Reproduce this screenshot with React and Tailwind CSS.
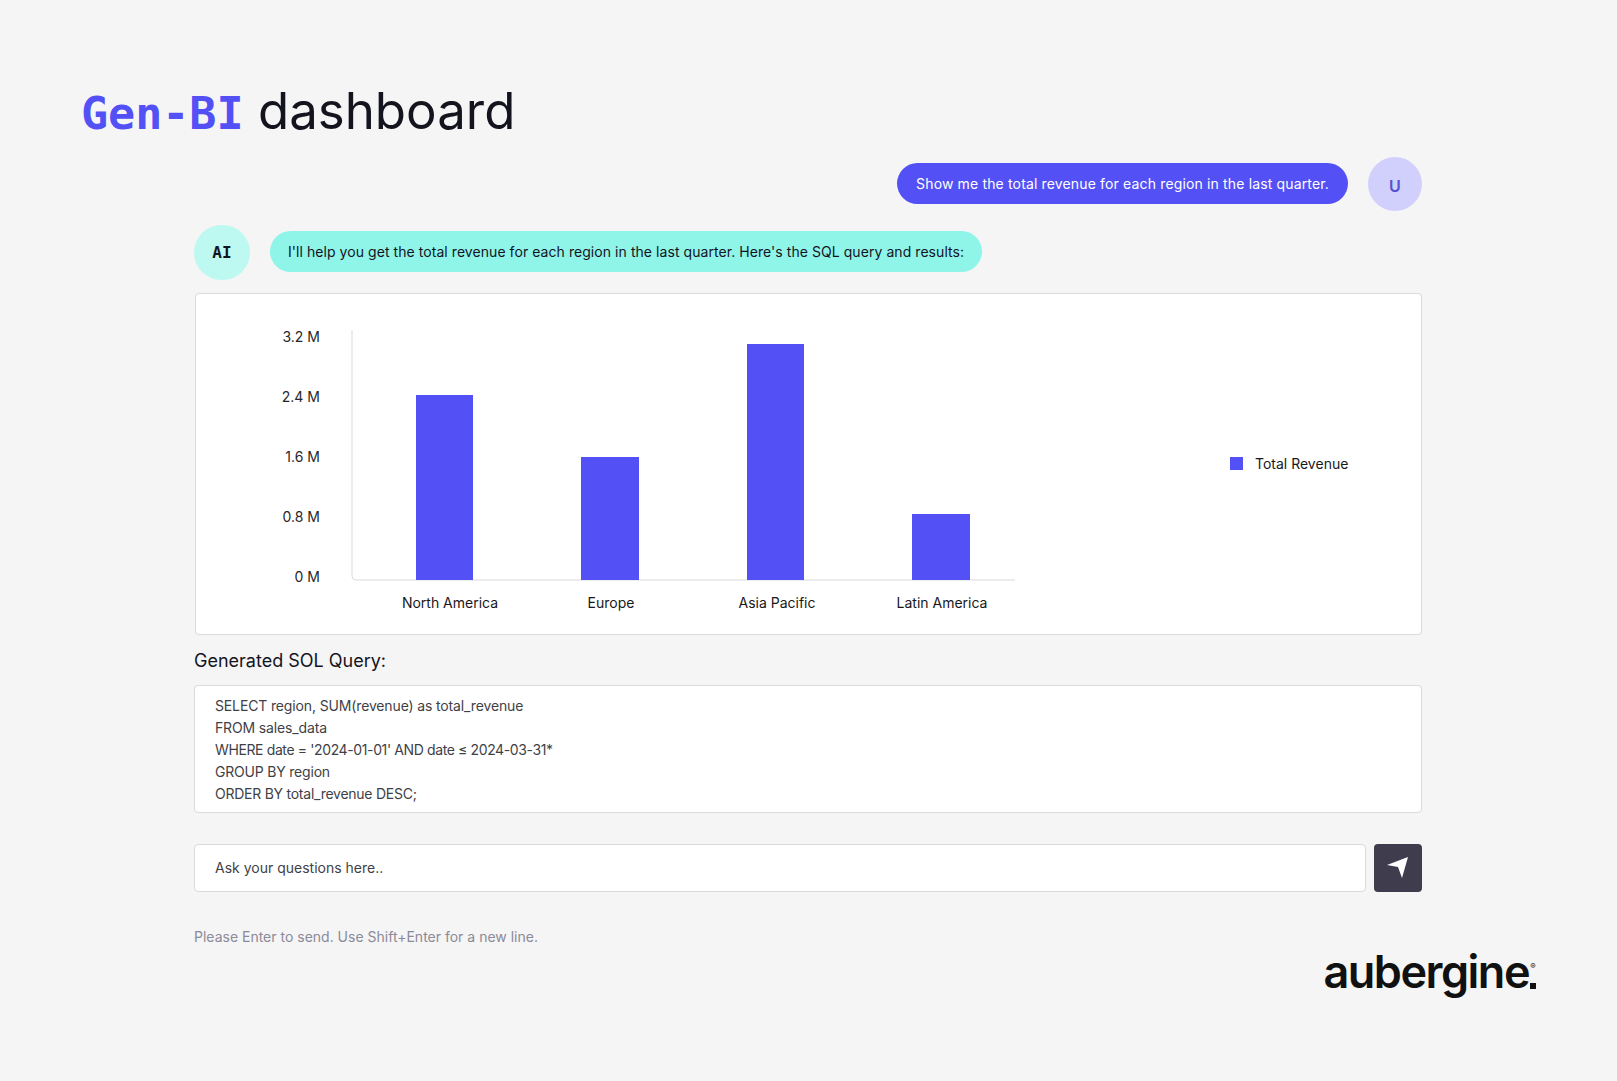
import React from 'react';

const yTicks = [
    { label: '3.2 M', y: 43 },
    { label: '2.4 M', y: 103 },
    { label: '1.6 M', y: 163 },
    { label: '0.8 M', y: 223 },
    { label: '0 M', y: 283 },
];

const bars = [
    { label: 'North America', x: 220, w: 57, top: 101, labelX: 254 },
    { label: 'Europe', x: 385, w: 58, top: 163, labelX: 415 },
    { label: 'Asia Pacific', x: 551, w: 57, top: 50, labelX: 581 },
    { label: 'Latin America', x: 716, w: 58, top: 220, labelX: 746 },
];

const sqlLines = [
    { text: 'SELECT region, SUM(revenue) as total_revenue', cls: 'tracking-[-0.14px]' },
    { text: 'FROM sales_data', cls: 'tracking-[-0.14px]' },
    { text: "WHERE date = '2024-01-01' AND date ≤ 2024-03-31*", cls: 'tracking-[-0.38px]' },
    { text: 'GROUP BY region', cls: 'tracking-[-0.2px]' },
    { text: 'ORDER BY total_revenue DESC;', cls: 'tracking-[-0.25px]' },
];

const RevenueChart = () => (
    <svg width="900" height="339" viewBox="0 0 900 339" className="shrink-0 self-start font-['Inter',sans-serif] text-[14px]">
        <path d="M156 36V282Q156 286 160 286H819" fill="none" stroke="#d9d9de" strokeWidth="1" />
        {yTicks.map(t => (
            <text key={t.label} x="124" y={t.y + 5} textAnchor="end" fill="#27272a">{t.label}</text>
        ))}
        {bars.map(b => (
            <g key={b.label}>
                <rect x={b.x} y={b.top} width={b.w} height={286 - b.top} fill="#5351f5" />
                <text x={b.labelX} y="314" textAnchor="middle" fill="#18181b">{b.label}</text>
            </g>
        ))}
    </svg>
);

const App = () => {
    return (
        <div className="min-h-[1081px] bg-[#f5f5f5] font-['Inter',sans-serif] text-[14px]">
            <div className="px-[81px] pt-[79px]">
                <h1 className="h-[65px] text-[51px] leading-[64px] text-[#14141f] whitespace-nowrap">
                    <span className="font-['DejaVu_Sans_Mono',monospace] font-bold text-[#5351f5] text-[45px]">Gen-BI</span>{' '}
                    dashboard
                </h1>
            </div>

            <div className="pl-[194px] pr-[195px] mt-[13px]">
                <div className="flex items-center justify-end gap-[20px]">
                    <div className="h-[41px] mb-[2px] rounded-full bg-[#5351f5] px-[19px] flex items-center text-white whitespace-nowrap tracking-[0.15px]">
                        Show me the total revenue for each region in the last quarter.
                    </div>
                    <div className="w-[54px] h-[54px] pt-[3px] rounded-full bg-[#d1d0fc] flex items-center justify-center text-[16px] font-semibold text-[#5351d0]">
                        U
                    </div>
                </div>

                <div className="flex items-center gap-[20px] mt-[14px]">
                    <div className="w-[56px] h-[55px] pt-[1px] rounded-full bg-[#bdf9f1] flex items-center justify-center font-['DejaVu_Sans_Mono',monospace] font-bold text-[16px] text-[#14141f]">
                        AI
                    </div>
                    <div className="h-[41px] mb-[2px] rounded-full bg-[#8ff5e9] px-[18px] flex items-center text-[#14141f] whitespace-nowrap tracking-[0.06px]">
                        I'll help you get the total revenue for each region in the last quarter. Here's the SQL query and results:
                    </div>
                </div>

                <div className="mt-[13px] ml-px h-[342px] bg-white border border-[#d9d9de] rounded-[4px] flex items-center">
                    <RevenueChart />
                    <div className="flex items-center gap-[12px] ml-[134px] -mt-[1px] text-[#18181b] whitespace-nowrap">
                        <span className="w-[13px] h-[13px] bg-[#5351f5]" />
                        Total Revenue
                    </div>
                </div>

                <h2 className="mt-[14px] h-[24px] text-[18px] leading-[24px] text-[#14141f]">Generated SOL Query:</h2>

                <div className="mt-[12px] h-[128px] bg-white border border-[#d9d9de] rounded-[4px] px-[20px] py-[9px] leading-[22px] text-[#3f3f46]">
                    {sqlLines.map(line => (
                        <div key={line.text} className={line.cls}>{line.text}</div>
                    ))}
                </div>

                <div className="flex gap-[8px] mt-[31px]">
                    <div className="flex-1 h-[48px] pb-px bg-white border border-[#d9d9de] rounded-[4px] px-[20px] flex items-center text-[#3f3f46]">
                        Ask your questions here..
                    </div>
                    <button className="w-[48px] h-[48px] rounded-[4px] bg-[#3f3d4d] flex items-center justify-center">
                        <svg width="48" height="48" viewBox="0 0 48 48">
                            <path d="M34 13L13 21L24 23L28 34Z" fill="#fff" />
                        </svg>
                    </button>
                </div>

                <p className="mt-[35px] leading-[20px] text-[#8b8b99]">Please Enter to send. Use Shift+Enter for a new line.</p>
            </div>

            <div className="flex justify-end pr-[80px] -mt-[3px]">
                <div className="flex items-end text-[45px] leading-[56px] font-semibold tracking-[-1.5px] text-[#111111]">
                    aubergine
                    <div className="flex flex-col items-center gap-[13px] w-[8px] mb-[11px] tracking-normal">
                        <span className="text-[8px] leading-[8px] font-normal">®</span>
                        <span className="w-[6px] h-[6px] bg-[#111111]" />
                    </div>
                </div>
            </div>
        </div>
    );
};

export default App;
